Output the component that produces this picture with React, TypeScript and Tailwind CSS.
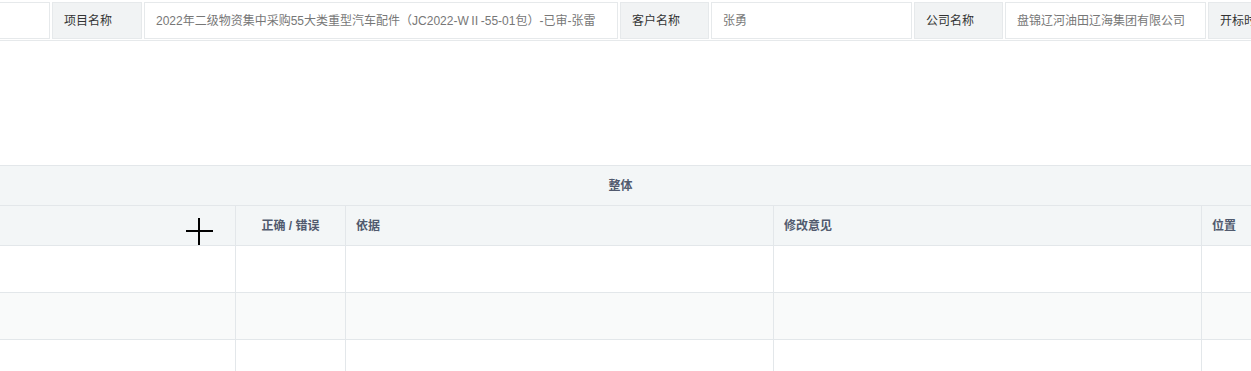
import React from "react";

const font = {
  fontFamily: '"Liberation Sans", "Noto Sans CJK SC", sans-serif',
};

function Label({ text, w }: { text: string; w: string }) {
  return (
    <div
      className={`${w} h-[37px] shrink-0 flex items-center pl-[11px] border border-[#e6e9eb] bg-[#f1f3f4] text-[12px] text-[#333] whitespace-nowrap overflow-hidden`}
    >
      {text}
    </div>
  );
}

function Value({ text, w, className = "" }: { text: string; w: string; className?: string }) {
  return (
    <div
      className={`${w} h-[37px] shrink-0 flex items-center pl-[11px] border border-[#e6e9eb] bg-white text-[12px] text-[#777] whitespace-nowrap overflow-hidden ${className}`}
    >
      {text}
    </div>
  );
}

const cols = "grid grid-cols-[236px_110px_428px_428px_1fr]";

function DataRow({ striped }: { striped?: boolean }) {
  return (
    <div className={`${cols} h-[47px] border-b border-[#e3e7ea] ${striped ? "bg-[#f9fafa]" : "bg-white"}`}>
      <div className="border-r border-[#e3e7ea]" />
      <div className="border-r border-[#e3e7ea]" />
      <div className="border-r border-[#e3e7ea]" />
      <div className="border-r border-[#e3e7ea]" />
      <div />
    </div>
  );
}

export default function App() {
  return (
    <div className="relative w-[1251px] h-[371px] overflow-hidden bg-white" style={font}>
      {/* info row */}
      <div className="h-[41px] pt-[2px] border-b border-[#e6e9eb]">
        <div className="flex gap-[2px] -ml-[10px]">
          <Value text="" w="w-[60px]" />
          <Label text="项目名称" w="w-[90px]" />
          <Value text="2022年二级物资集中采购55大类重型汽车配件（JC2022-WⅡ-55-01包）-已审-张雷" w="w-[474px]" />
          <Label text="客户名称" w="w-[89px]" />
          <Value text="张勇" w="w-[201px]" />
          <Label text="公司名称" w="w-[89px]" />
          <Value text="盘锦辽河油田辽海集团有限公司" w="w-[201px]" />
          <Label text="开标时间" w="w-[89px]" />
        </div>
      </div>

      <div className="h-[124px]" />

      {/* table */}
      <div className="border-t border-[#e3e7ea]">
        <div className="h-[40px] bg-[#f3f6f7] border-b border-[#e3e7ea] flex items-center justify-center pr-[10px] text-[12px] font-bold text-[#515a6e]">
          整体
        </div>
        <div className={`${cols} h-[40px] bg-[#f3f6f7] border-b border-[#e3e7ea] text-[12px] font-bold text-[#515a6e]`}>
          <div className="border-r border-[#e3e7ea]" />
          <div className="border-r border-[#e3e7ea] flex items-center justify-center">正确 / 错误</div>
          <div className="border-r border-[#e3e7ea] flex items-center pl-[10px]">依据</div>
          <div className="border-r border-[#e3e7ea] flex items-center pl-[10px]">修改意见</div>
          <div className="flex items-center pl-[10px]">位置</div>
        </div>
        <DataRow />
        <DataRow striped />
        <DataRow />
      </div>

      {/* mouse cursor */}
      <svg className="absolute left-[186px] top-[218px]" width="27" height="27" viewBox="0 0 27 27">
        <rect x="0" y="12" width="27" height="2" fill="#000" />
        <rect x="12" y="0" width="2" height="27" fill="#000" />
      </svg>
    </div>
  );
}
